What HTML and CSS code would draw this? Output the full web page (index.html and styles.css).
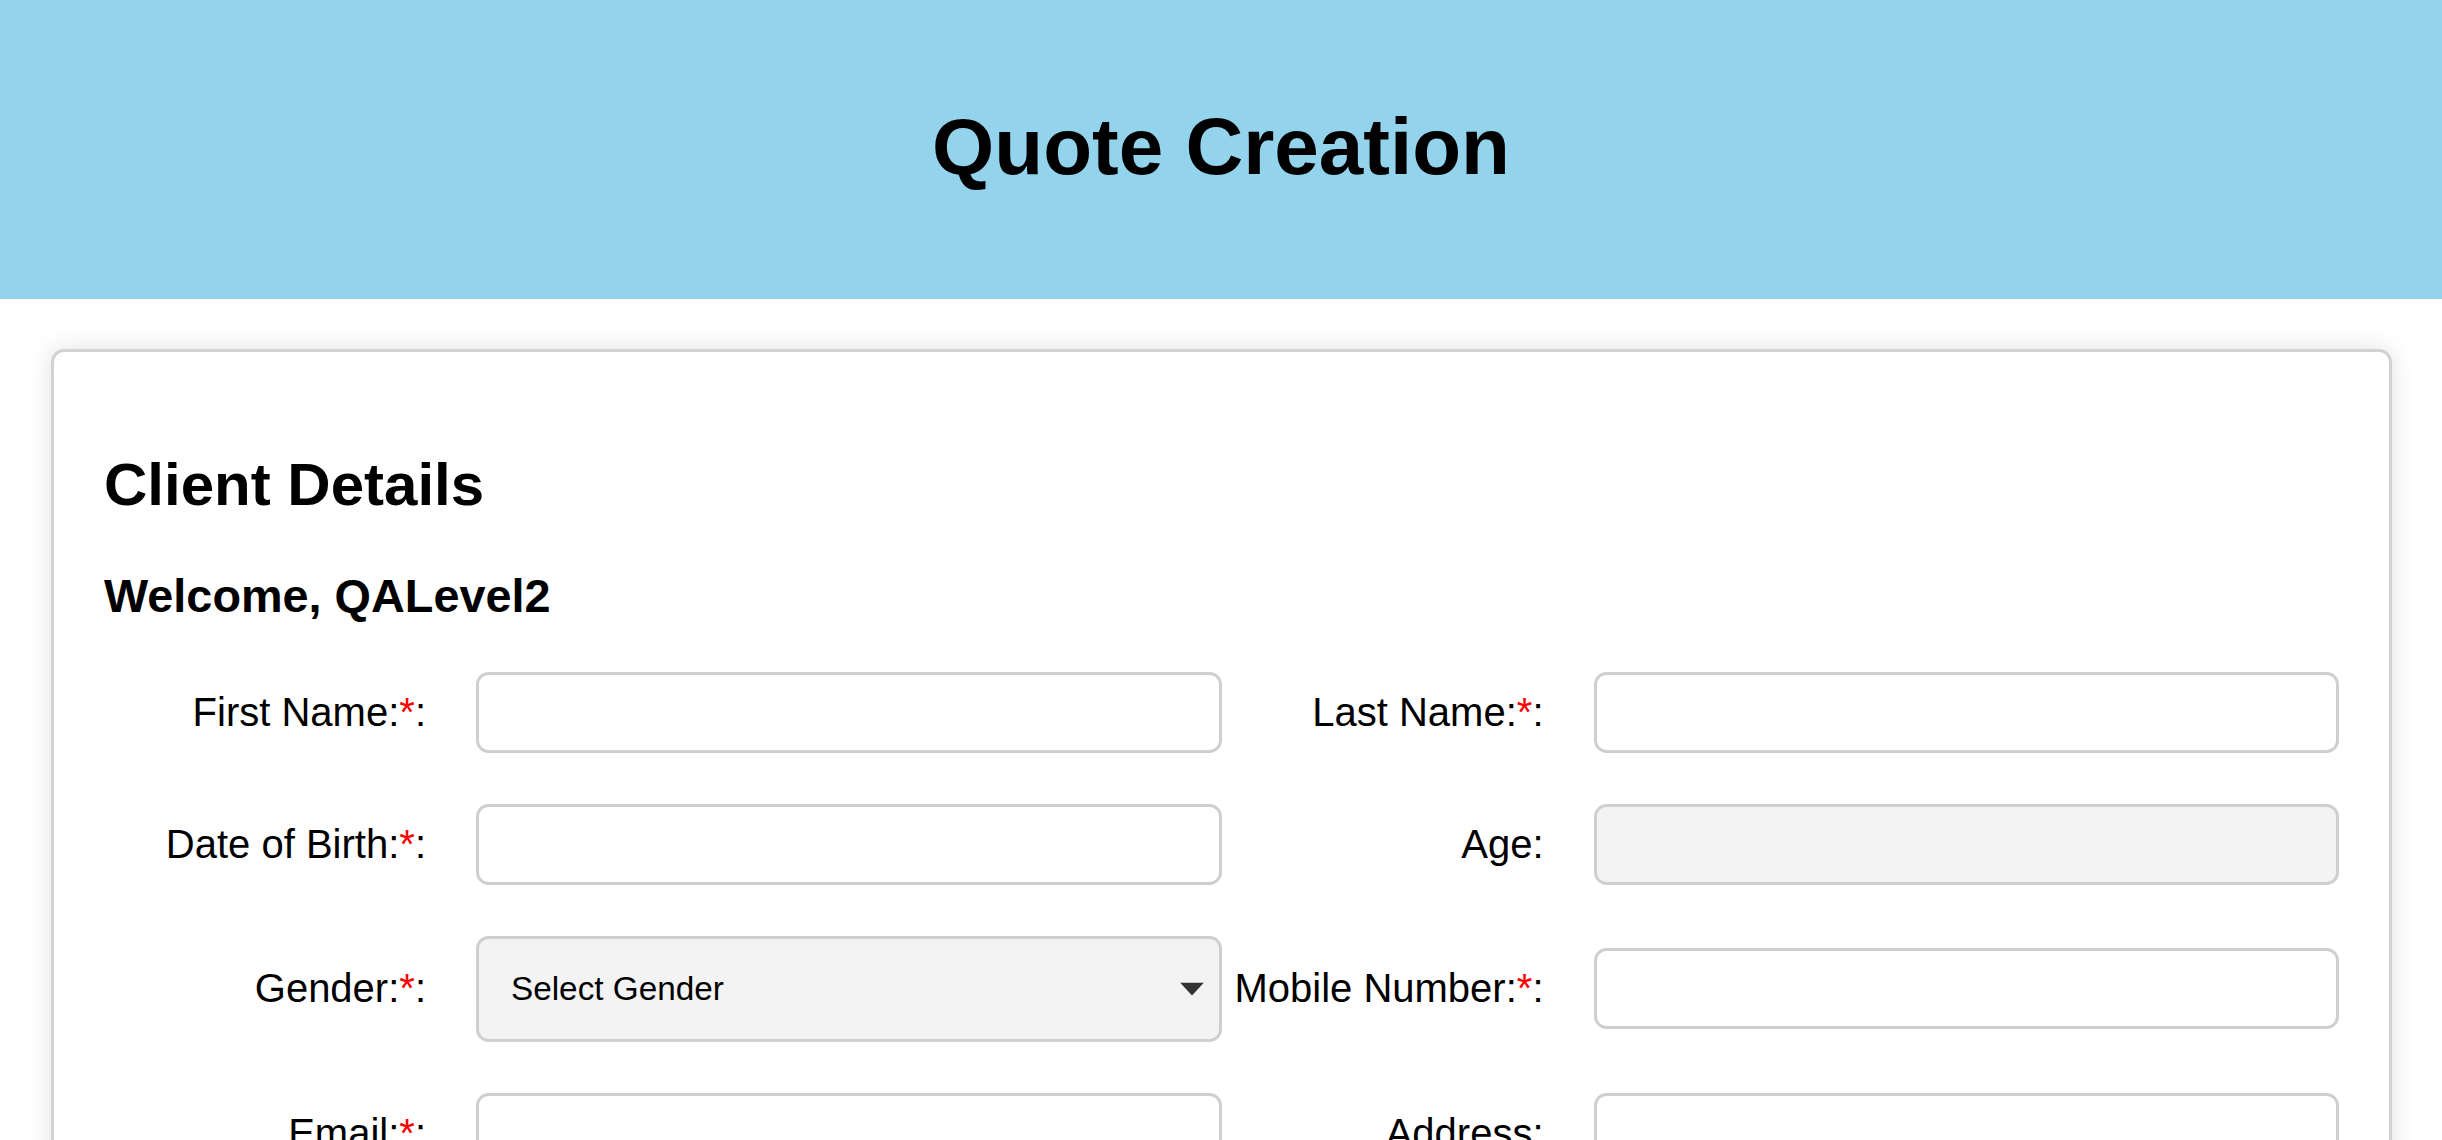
FILE: index.html
```html
<!DOCTYPE html>
<html lang="en">
<head>
<meta charset="utf-8">
<title>Quote Creation</title>
<link rel="stylesheet" href="styles.css">
</head>
<body>
<header class="page-header">
  <h1 class="page-title">Quote Creation</h1>
</header>
<main class="card">
  <h2 class="section-title">Client Details</h2>
  <h3 class="welcome">Welcome, QALevel2</h3>
  <form class="form-grid">
    <div class="form-group">
      <label class="form-label">First Name:<span class="req">*</span>:</label>
      <input class="form-input" type="text">
    </div>
    <div class="form-group">
      <label class="form-label">Last Name:<span class="req">*</span>:</label>
      <input class="form-input" type="text">
    </div>
    <div class="form-group">
      <label class="form-label">Date of Birth:<span class="req">*</span>:</label>
      <input class="form-input" type="text">
    </div>
    <div class="form-group">
      <label class="form-label">Age:</label>
      <input class="form-input form-input-disabled" type="text" disabled>
    </div>
    <div class="form-group">
      <label class="form-label">Gender:<span class="req">*</span>:</label>
      <div class="select-wrap">
        <select class="form-select">
          <option>Select Gender</option>
          <option>Male</option>
          <option>Female</option>
        </select>
        <svg class="select-arrow" viewBox="0 0 24 13" width="24" height="13" aria-hidden="true"><path d="M0 0 H24 L12 13 Z"/></svg>
      </div>
    </div>
    <div class="form-group">
      <label class="form-label">Mobile Number:<span class="req">*</span>:</label>
      <input class="form-input" type="text">
    </div>
    <div class="form-group">
      <label class="form-label">Email:<span class="req">*</span>:</label>
      <input class="form-input" type="text">
    </div>
    <div class="form-group">
      <label class="form-label">Address:</label>
      <input class="form-input" type="text">
    </div>
  </form>
</main>
</body>
</html>
```
FILE: styles.css
```css
html, body {
  margin: 0;
  padding: 0;
  background: #ffffff;
}

body {
  font-family: "Liberation Sans", Arial, sans-serif;
  color: #000000;
}

.page-header {
  background: #93d4ec;
  padding: 50px 0;
  text-align: center;
}

.page-title {
  margin: 50.6px 0 56.6px;
  font-size: 80px;
  font-weight: bold;
  line-height: normal;
}

.card {
  display: block;
  margin: 50px 50px 0 51px;
  padding: 50px;
  background: #ffffff;
  border: 3px solid #d2d2d2;
  border-radius: 13px;
  box-shadow: 0 0 25px rgba(0, 0, 0, 0.12);
}

.section-title {
  margin: 48px 0 50px;
  font-size: 60px;
  font-weight: bold;
  line-height: normal;
}

.welcome {
  margin: 0 0 48.8px;
  font-size: 46.8px;
  font-weight: bold;
  line-height: normal;
}

.form-grid {
  display: grid;
  grid-template-columns: 1fr 1fr;
  row-gap: 51px;
  align-items: center;
}

.form-group {
  display: flex;
  align-items: center;
}

.form-label {
  flex: 0 0 322px;
  margin-right: 50px;
  text-align: right;
  font-size: 40px;
  white-space: nowrap;
}

.req {
  color: #ff0000;
}

.form-input {
  flex: 1;
  min-width: 0;
  height: 81px;
  box-sizing: border-box;
  border: 3px solid #cfcfcf;
  border-radius: 12.5px;
  background: #ffffff;
  padding: 0 25px;
  font-family: "Liberation Sans", Arial, sans-serif;
  font-size: 33.3px;
}

.form-input-disabled {
  background: #f3f3f3;
}

.select-wrap {
  flex: 1;
  position: relative;
  min-width: 0;
}

.form-select {
  display: block;
  width: 100%;
  height: 106px;
  box-sizing: border-box;
  -webkit-appearance: none;
  appearance: none;
  border: 3px solid #cfcfcf;
  border-radius: 12.5px;
  background: #f3f3f3;
  padding: 0 60px 0 32px;
  font-family: "Liberation Sans", Arial, sans-serif;
  font-size: 33.3px;
  color: #000000;
}

.select-arrow {
  position: absolute;
  right: 18px;
  top: 50%;
  transform: translateY(-50%);
  fill: #333333;
}
```
